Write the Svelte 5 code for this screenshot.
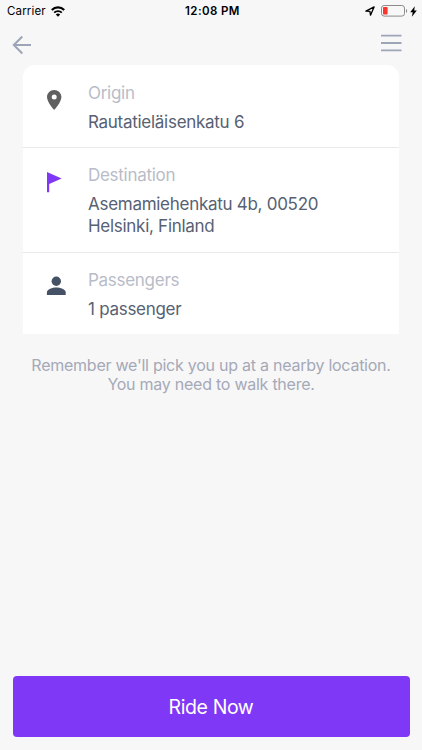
<script>
  let origin = "Rautatieläisenkatu 6";
  let destination = "Asemamiehenkatu 4b, 00520 Helsinki, Finland";
  let passengers = 1;

  $: rows = [
    { icon: "pin", label: "Origin", value: origin },
    { icon: "flag", label: "Destination", value: destination },
    { icon: "person", label: "Passengers", value: `${passengers} passenger${passengers === 1 ? "" : "s"}` },
  ];
</script>

<div class="screen">
  <div class="status">
    <div class="left">
      <span class="carrier">Carrier</span>
      <svg width="14" height="11" viewBox="0 0 14 11">
        <path d="M.8 4a8.7 8.7 0 0 1 12.4 0" fill="none" stroke="#000" stroke-width="2.2" />
        <path d="M3.2 6.7a5.3 5.3 0 0 1 7.6 0" fill="none" stroke="#000" stroke-width="1.9" />
        <path d="M7 10.8 4.8 8.6a3 3 0 0 1 4.4 0z" />
      </svg>
    </div>
    <span class="time">12:08 PM</span>
    <div class="right">
      <svg class="locate" width="10" height="10" viewBox="0 0 10 10">
        <path d="M.9 5.2 9.1.9 5.5 9.2 4.9 5.3z" fill="none" stroke="#000" stroke-width="1.3" stroke-linejoin="round" />
      </svg>
      <svg class="battery" width="27" height="12" viewBox="0 0 27 12">
        <rect x=".5" y=".5" width="23" height="10.6" rx="2.6" fill="none" stroke="#8b8b8b" />
        <rect x="2" y="2" width="4.6" height="7.6" rx=".8" fill="#f8352f" />
        <path d="M25 4v3.8a2.1 2.1 0 0 0 0-3.8z" fill="#8b8b8b" />
      </svg>
      <svg class="bolt" width="7" height="11" viewBox="0 0 7 11">
        <path d="M4.8.2.2 6.3h2.5l-.8 4.5L6.8 4.5H4.2z" />
      </svg>
    </div>
  </div>

  <nav>
    <button aria-label="Back">
      <svg width="20" height="20" viewBox="0 0 20 20" fill="none" stroke="#9ea5b7" stroke-width="2">
        <path d="M19 10H2M10.3 1.5 1.8 10l8.5 8.5" />
      </svg>
    </button>
    <button aria-label="Menu">
      <svg width="22" height="18" viewBox="0 0 22 18" fill="none" stroke="#9ea5b7" stroke-width="1.8">
        <path d="M1 1.7h20.5M1 9h20.5M1 16.3h20.5" />
      </svg>
    </button>
  </nav>

  <section class="card">
    {#each rows as row (row.icon)}
      <div class="row">
        <div class="icon">
          {#if row.icon === "pin"}
            <svg width="24" height="24" viewBox="0 0 24 24" fill="#606060">
              <path d="M12.2 2C8.2 2 5 5.2 5 9.1 5 14.4 12.2 22 12.2 22s7.2-7.6 7.2-12.9C19.4 5.2 16.2 2 12.2 2zm0 9.6a2.5 2.5 0 1 1 0-5 2.5 2.5 0 0 1 0 5z" />
            </svg>
          {:else if row.icon === "flag"}
            <svg width="24" height="24" viewBox="0 0 24 24" fill="#7f39f6">
              <path d="M5 2l14.6 6.6L7.2 14v8.3H5z" />
            </svg>
          {:else}
            <svg width="28" height="28" viewBox="0 0 28 28" fill="#455265">
              <circle cx="14.3" cy="9.2" r="4.7" />
              <path d="M4.9 23v-2.5c0-3.3 5.5-5 9.4-5s9.4 1.7 9.4 5V23z" />
            </svg>
          {/if}
        </div>
        <div class="text">
          <span class="label">{row.label}</span>
          <span class="value">{row.value}</span>
        </div>
      </div>
    {/each}
  </section>

  <p class="hint">Remember we'll pick you up at a nearby location.<br />You may need to walk there.</p>

  <button class="ride">Ride Now</button>
</div>

<style>
  :global(body) { background: #f7f7f7; }
  .screen { height: 750px; box-sizing: border-box; display: flex; flex-direction: column; background: #f7f7f7;
    padding-bottom: 13px; font-family: Inter, "Liberation Sans", sans-serif; }
  button { border: none; background: none; padding: 0; font: inherit; display: block; }
  svg { display: block; flex: none; }

  .status { height: 22px; display: grid; grid-template-columns: 1fr auto 1fr; align-items: center;
    padding: 0 5px 0 7px; color: #000; font-size: 11.5px; }
  .left, .right { display: flex; align-items: center; }
  .left { gap: 5px; }
  .carrier { letter-spacing: 0.15px; }
  .time { font-weight: 600; letter-spacing: 0.4px; padding-left: 1px; }
  .right { justify-content: flex-end; }
  .locate { margin-right: 6px; }
  .battery { margin-right: 2px; }

  nav { height: 43px; box-sizing: border-box; display: flex; justify-content: space-between; align-items: flex-start;
    padding: 12px 20px 0 12px; }
  nav button:first-child { padding-top: 1px; }

  .card { margin: 0 23px; background: #fff; border-radius: 12px 12px 0 0; }
  .row { display: flex; padding: 16px 20px 14px 19px; }
  .row:first-child { padding-top: 17px; }
  .row:last-child { padding-bottom: 13.5px; }
  .row + .row { border-top: 1px solid #e9e9eb; }
  .icon { width: 46px; flex: none; padding-top: 6px; }
  .row:last-child .icon { padding-top: 3px; }
  .text { display: flex; flex-direction: column; gap: 6px; font-size: 17px; line-height: 22.5px; letter-spacing: -0.28px; }
  .row:last-child .text { gap: 6.5px; }
  .label { color: #b9bcc8; }
  .value { color: #566173; }

  .hint { margin: 22px 0 0; text-align: center; color: #a5a9b8; font-size: 16px; line-height: 19.5px; letter-spacing: -0.25px; }
  .ride { height: 61px; margin: auto 12.5px 0; border-radius: 4px; background: #7f39f6; color: #fff;
    font-size: 19.5px; letter-spacing: -0.4px; }
</style>
